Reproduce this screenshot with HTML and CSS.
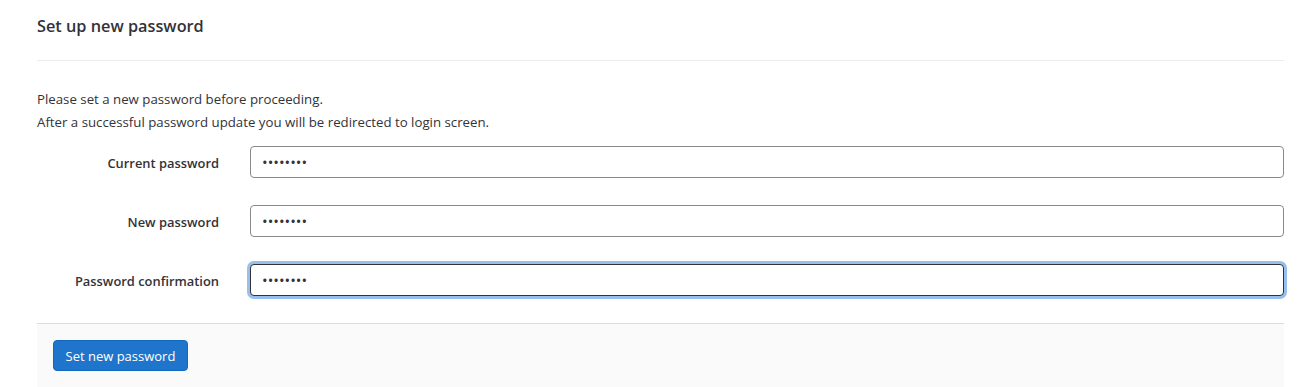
FILE: index.html
```html
<!DOCTYPE html>
<html>
<head>
<meta charset="utf-8">
<link rel="stylesheet" href="styles.css">
</head>
<body>
<div class="page">
  <h3 class="page-title">Set up new password</h3>
  <hr class="divider">
  <form class="form">
    <div class="intro">
      <p>Please set a new password before proceeding.</p>
      <p>After a successful password update you will be redirected to login screen.</p>
    </div>
    <div class="row">
      <label class="label" for="cur">Current password</label>
      <input class="input" id="cur" type="password" value="password">
    </div>
    <div class="row">
      <label class="label" for="new">New password</label>
      <input class="input" id="new" type="password" value="password">
    </div>
    <div class="row">
      <label class="label" for="conf">Password confirmation</label>
      <input class="input input-focus" id="conf" type="password" value="password">
    </div>
    <div class="actions">
      <button type="button" class="btn">Set new password</button>
    </div>
  </form>
</div>
</body>
</html>
```

FILE: styles.css
```css
* { box-sizing: border-box; }
html, body { margin: 0; padding: 0; background: #fff; }
body {
  font-family: "Open Sans", "Noto Sans", sans-serif;
  color: #333238;
  font-size: 13.25px;
}
.page {
  padding: 0 21px 0 37px;
}
.page-title {
  margin: 0;
  padding-top: 14px;
  font-size: 16.3px;
  font-weight: 600;
  line-height: 24px;
  color: #333238;
}
.divider {
  margin: 22px 0 0 0;
  border: 0;
  border-top: 1px solid #ececef;
}
.intro { padding-top: 27px; }
.intro p {
  margin: 0;
  line-height: 23px;
}
.row {
  display: grid;
  grid-template-columns: 182px 1fr;
  column-gap: 31px;
  align-items: center;
  margin-top: 12px;
}
.row + .row { margin-top: 27px; }
.label {
  text-align: right;
  font-weight: 600;
  font-size: 12.9px;
  padding-top: 2px;
}
.input {
  height: 32px;
  width: 100%;
  border: 1px solid #89888d;
  border-radius: 4px;
  padding: 0 11px;
  font-family: "Open Sans", sans-serif;
  font-size: 15px;
  color: #333238;
  background: #fff;
  outline: none;
}
.input-focus {
  border-color: #333238;
  box-shadow: 0 0 0 3px #97c1ec;
}
.actions {
  margin-top: 27px;
  border-top: 1px solid #dcdcde;
  background: #fafafa;
  padding: 16px 16px 16px;
  height: 64px;
}
.btn {
  height: 31px;
  padding: 0 11.5px;
  border: 1px solid #1068bf;
  border-radius: 4px;
  background: #1f75cb;
  color: #fff;
  font-family: "Open Sans", sans-serif;
  font-size: 13px;
}
```
